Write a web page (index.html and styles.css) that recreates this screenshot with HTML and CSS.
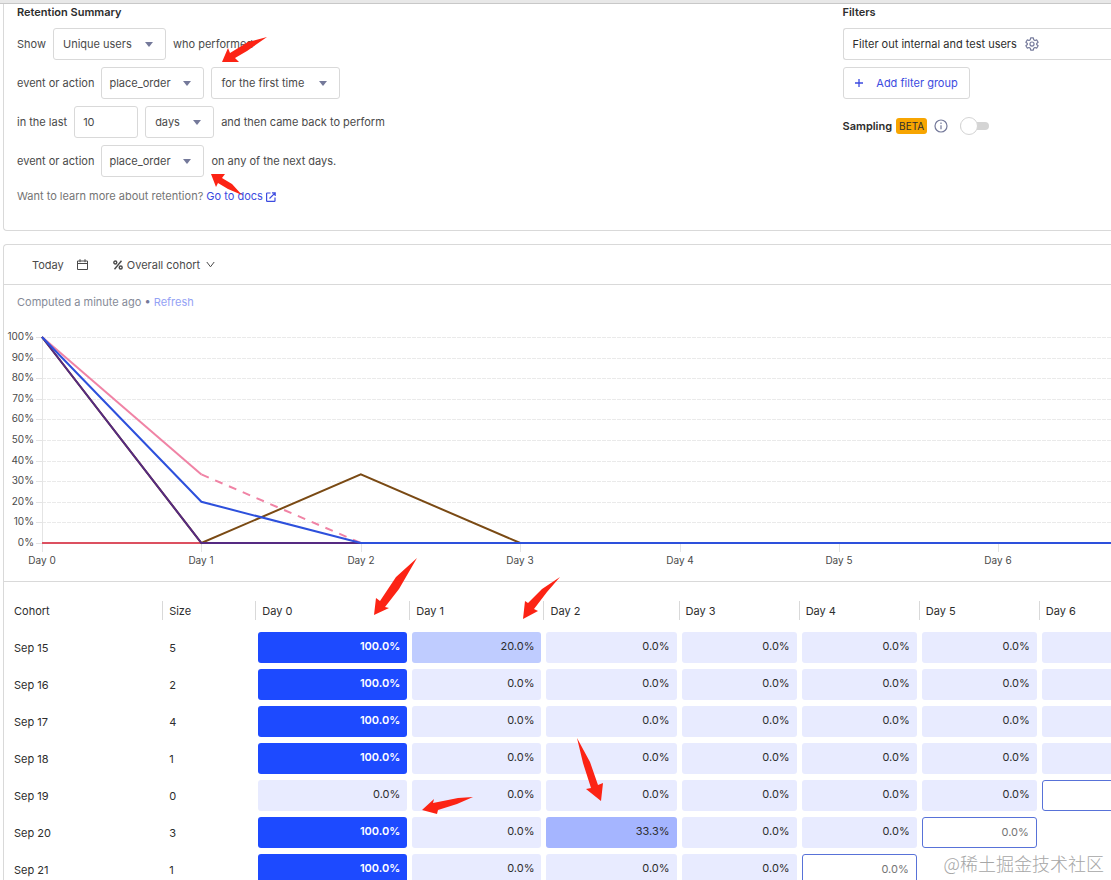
FILE: index.html
```html
<!DOCTYPE html>
<html lang="en">
<head>
    <meta charset="UTF-8">
    <meta name="viewport" content="width=device-width, initial-scale=1.0">
    <title>Retention</title>
    <link rel="stylesheet" href="styles.css">
</head>
<body>
    <div class="topbar"></div>

    <section class="card query">
        <div class="summary">
            <h2>Retention Summary</h2>
            <div class="row">
                <label for="users">Show</label>
                <span class="select w-users"><select id="users"><option>Unique users</option></select></span>
                <span>who performed</span>
            </div>
            <div class="row">
                <label for="target">event or action</label>
                <span class="select w-event"><select id="target"><option>place_order</option></select></span>
                <span class="select w-first"><select aria-label="Occurrence"><option>for the first time</option></select></span>
            </div>
            <div class="row">
                <label for="period">in the last</label>
                <input class="number" id="period" type="text" value="10">
                <span class="select w-days"><select aria-label="Unit"><option>days</option></select></span>
                <span>and then came back to perform</span>
            </div>
            <div class="row">
                <label for="returning">event or action</label>
                <span class="select w-event"><select id="returning"><option>place_order</option></select></span>
                <span>on any of the next days.</span>
            </div>
            <p class="docs">Want to learn more about retention?
                <a href="#docs">Go to docs<svg width="10" height="10" viewBox="0 0 10 10"><path d="M4.500 1H1.200Q.6 1 .6 1.600V8.800Q.6 9.400 1.200 9.400H8.400Q9 9.400 9 8.800V5.500M6 .8H9.200V4M9.200 .8L3.500 6.500" fill="none" stroke="currentColor" stroke-width="1.200"/></svg></a>
            </p>
        </div>

        <div class="filters">
            <h2>Filters</h2>
            <div class="filter-box">
                <span>Filter out internal and test users</span>
                <button class="icon-btn" aria-label="Settings">
                    <svg width="14" height="14" viewBox="0 0 24 24" fill="none" stroke="currentColor" stroke-width="2" stroke-linejoin="round"><path d="M9.700 1.500h4.600l.7 3.300 2 1.200 3.200-1 2.300 4-2.500 2.200v1.600l2.500 2.200-2.300 4-3.200-1-2 1.200-.7 3.300H9.700L9 19.200 7 18l-3.200 1-2.300-4L4 12.800v-1.600L1.500 9l2.300-4L7 6l2-1.200z"/><circle cx="12" cy="12" r="3.500"/></svg>
                </button>
            </div>
            <button class="add-filter"><svg width="10" height="10" viewBox="0 0 10 10"><path d="M5 1v8M1 5h8" stroke="currentColor" stroke-width="1.300"/></svg>Add filter group</button>
            <div class="sampling">
                <label for="sampling">Sampling</label>
                <span class="beta">BETA</span>
                <svg class="info" width="14" height="14" viewBox="0 0 14 14" fill="none" stroke="currentColor" stroke-width="1.200"><circle cx="7" cy="7" r="6"/><path d="M7 6.200v4M7 3.600v1.400"/></svg>
                <input class="toggle" id="sampling" type="checkbox">
            </div>
        </div>
    </section>

    <section class="card results">
        <div class="toolbar">
            <button class="date">Today
                <svg width="11" height="11" viewBox="0 0 11 11" fill="none" stroke="currentColor"><path d="M.5 2h10v8.500H.5zM.5 4.500h10M3 .2v3M8 .2v3"/></svg>
            </button>
            <button class="cohort-btn">
                <svg width="10" height="10" viewBox="0 0 10 10" fill="none" stroke="currentColor" stroke-width="1.400"><circle cx="2.300" cy="2.500" r="1.500"/><circle cx="7.700" cy="7.500" r="1.500"/><path d="M8.500 .8L1.500 9.200"/></svg>
                <span>Overall cohort</span>
                <svg class="chevron" width="9" height="7" viewBox="0 0 9 7"><path d="M.8 1l3.700 4.800L8.200 1" fill="none" stroke="currentColor"/></svg>
            </button>
        </div>
        <p class="computed">Computed a minute ago <b>•</b> <a href="#refresh">Refresh</a></p>
        <svg class="chart" id="chart" width="1320" height="250" role="img" aria-label="Retention by day"></svg>
        <div class="table-wrap">
            <table>
                <colgroup>
                    <col class="c-cohort"><col class="c-size"><col class="c-day0"><col class="c-day1"><col class="c-day2">
                    <col class="c-day"><col class="c-day"><col class="c-day"><col class="c-day">
                </colgroup>
                <thead>
                    <tr><th>Cohort</th><th>Size</th><th>Day 0</th><th>Day 1</th><th>Day 2</th><th>Day 3</th><th>Day 4</th><th>Day 5</th><th>Day 6</th></tr>
                </thead>
                <tbody id="cohorts"></tbody>
            </table>
        </div>
    </section>

    <svg class="arrows" width="1111" height="880" viewBox="0 0 1111 880" aria-hidden="true">
        <path d="M267 37L248 42L230 53L228 48L222 62L239 62L235 58L247 51Z"/>
        <path d="M211 174L225 174L222 178L232 184L242 195L228 189L218 183L216 187Z"/>
        <path d="M417 558L396 577L380 601L376 598L374 615L389 608L385 607L399 589Z"/>
        <path d="M560 577L542 589L528 603L525 601L523 619L538 611L534 609L547 592Z"/>
        <path d="M577 738L583 763L591 788L586 789L601 801L603 783L598 785L590 762Z"/>
        <path d="M473 797L458 798L433 803L434 799L422 810L437 814L438 810L457 804Z"/>
    </svg>
    <div class="watermark">@稀土掘金技术社区</div>

    <script>
        // null = bar without a value
        const cohorts = [
            ['Sep 15', 5, [100, 20, 0, 0, 0, 0, null]],
            ['Sep 16', 2, [100, 0, 0, 0, 0, 0, null]],
            ['Sep 17', 4, [100, 0, 0, 0, 0, 0, null]],
            ['Sep 18', 1, [100, 0, 0, 0, 0, 0, null]],
            ['Sep 19', 0, [0, 0, 0, 0, 0, 0, null]],
            ['Sep 20', 3, [100, 0, 33.3, 0, 0, 0]],
            ['Sep 21', 1, [100, 0, 0, 0, 0]]
        ];

        // the last day of these cohorts is still in progress
        const openCohorts = ['Sep 19', 'Sep 20', 'Sep 21'];

        function cellClass(value, open) {
            if (open) return 'cell open';
            if (value === 100) return 'cell full';
            if (value > 30) return 'cell mid';
            if (value > 0) return 'cell low';
            return 'cell';
        }

        document.getElementById('cohorts').innerHTML = cohorts.map(([name, size, days]) => {
            const cells = days.map((v, i) => {
                const open = openCohorts.includes(name) && i === days.length - 1;
                const text = v === null ? '' : v.toFixed(1) + '%';
                return `<td class="day"><div class="${cellClass(v, open)}">${text}</div></td>`;
            }).join('');
            return `<tr><td>${name}</td><td>${size}</td>${cells}</tr>`;
        }).join('');

        // chart
        const left = 38, top0 = 14, height = 206, step = 159.4;
        const px = day => left + day * step;
        const py = pct => top0 + height - pct / 100 * height;
        let out = '';
        for (let p = 0; p <= 100; p += 10) {
            const y = Math.round(py(p)) + 0.5;
            out += `<line class="grid" x1="${left}" x2="1320" y1="${y}" y2="${y}"/>`;
            out += `<line class="tick" x1="${left - 6}" x2="${left}" y1="${y}" y2="${y}"/>`;
            out += `<text class="axis-y" x="${left - 8}" y="${Math.round(py(p)) + 3}">${p}%</text>`;
        }
        out += `<line class="tick" x1="${left + 0.5}" x2="${left + 0.5}" y1="${top0}" y2="${py(0) + 9}"/>`;
        for (let d = 0; d <= 6; d++) {
            const x = Math.round(px(d)) + 0.5;
            out += `<line class="tick" x1="${x}" x2="${x}" y1="${py(0)}" y2="${py(0) + 9}"/>`;
            out += `<text class="axis-x" x="${Math.round(px(d))}" y="${py(0) + 21}">Day ${d}</text>`;
        }
        const line = (cls, pts) => `<polyline class="line ${cls}" points="${pts.map(([d, p]) => px(d) + ',' + py(p)).join(' ')}"/>`;
        out += line('red', [[0, 0], [1, 0]]);
        out += line('pink', [[0, 100], [1, 33.3]]);
        out += line('pink dashed', [[1, 33.3], [2, 0]]);
        out += line('brown', [[0, 100], [1, 0], [2, 33.3], [3, 0]]);
        out += line('purple', [[0, 100], [1, 0], [2, 0]]);
        out += line('blue', [[0, 100], [1, 20], [2, 0], [8, 0]]);
        document.getElementById('chart').innerHTML = out;
    </script>
</body>
</html>
```
FILE: styles.css
```css
* { box-sizing: border-box; }
body {
    margin: 0;
    height: 100vh;
    overflow: hidden;
    position: relative;
    background: #fff;
    color: #2d2d2d;
    font-family: Inter, "Liberation Sans", sans-serif;
    font-size: 11px;
    line-height: 16px;
}
h2, p { margin: 0; }
h2 {
    font-size: 11px;
    font-weight: 600;
    line-height: 16px;
    margin-bottom: 8px;
}
a { color: #3c4be0; text-decoration: none; }
button, input, select {
    font: inherit;
    color: inherit;
    margin: 0;
}
button {
    background: none;
    border: 0;
    padding: 0;
}
.topbar {
    height: 4px;
    background: #e8e8e8;
    border-bottom: 1px solid #c8c8c8;
}
.card {
    margin-left: 3px;
    border: 1px solid #d9d9d9;
    border-right: 0;
    border-radius: 4px 0 0 4px;
}

/* query */
.query {
    display: grid;
    grid-template-columns: 3fr 1fr;
    border-top: 0;
    border-top-left-radius: 0;
    padding: 0 0 26px 13px;
}
.summary { color: #4a4a4a; }
.summary h2, .filters h2 { color: #2d2d2d; }
.row {
    display: flex;
    align-items: center;
    gap: 7px;
    height: 32px;
    margin-bottom: 7px;
}
.select {
    display: grid;
    align-items: center;
    height: 32px;
}
.select select, .select::after { grid-area: 1 / 1; }
.select select {
    width: 100%;
    height: 32px;
    appearance: none;
    border: 1px solid #d9d9d9;
    border-radius: 3px;
    background: #fff;
    padding: 0 9px;
}
.select::after {
    content: "";
    justify-self: end;
    margin-right: 13px;
    border: 4px solid transparent;
    border-top: 5px solid #74799a;
    border-bottom: 0;
    pointer-events: none;
}
.w-users { width: 113px; }
.w-event { width: 103px; }
.w-event select { padding: 0 7px; }
.w-first { width: 129px; }
.w-days { width: 69px; }
.number {
    width: 64px;
    height: 32px;
    border: 1px solid #d9d9d9;
    border-radius: 3px;
    padding: 0 8px;
}
.docs { color: #747474; padding-top: 4px; }
.docs svg { margin-left: 3px; vertical-align: -2px; }

.filters { padding-left: 5px; }
.filter-box {
    display: flex;
    align-items: center;
    gap: 8px;
    height: 32px;
    border: 1px solid #d9d9d9;
    border-right: 0;
    border-radius: 3px 0 0 3px;
    padding-left: 9px;
}
.icon-btn { display: flex; color: #74799a; }
.add-filter {
    display: flex;
    align-items: center;
    justify-content: center;
    gap: 12px;
    width: 127px;
    height: 32px;
    margin-top: 7px;
    border: 1px solid #d9d9d9;
    border-radius: 3px;
    color: #3c4be0;
}
.sampling {
    display: flex;
    align-items: center;
    gap: 4px;
    margin-top: 19px;
}
.sampling label { font-weight: 600; }
.beta {
    background: #f7a501;
    border-radius: 3px;
    padding: 0 3px;
    font-size: 10px;
}
.info { color: #74799a; margin: 0 8px 0 3px; }
.toggle {
    appearance: none;
    display: flex;
    align-items: center;
    width: 29px;
    height: 8px;
    border-radius: 4px;
    background: #d4d4d4;
}
.toggle::before {
    content: "";
    width: 16px;
    height: 16px;
    flex: none;
    border: 1px solid #d4d4d4;
    border-radius: 50%;
    background: #fff;
}

/* results */
.results {
    margin-top: 13px;
    border-bottom: 0;
    overflow: hidden;
}
.toolbar {
    display: flex;
    align-items: center;
    gap: 25px;
    height: 40px;
    padding-left: 28px;
    border-bottom: 1px solid #d9d9d9;
    color: #4a4a4a;
}
.date { display: flex; align-items: center; gap: 13px; }
.cohort-btn { display: flex; align-items: center; gap: 4px; }
.chevron { margin-left: 2px; }
.computed { padding: 9px 0 0 13px; color: #868b98; }
.computed b { color: #74799a; font-weight: 400; }
.computed a { color: #94a2f5; }
.chart { display: block; margin-top: 13px; height: 258px; }
.grid { stroke: #eaeaea; stroke-dasharray: 4 1; }
.tick { stroke: #e4e4e4; }
.axis-x, .axis-y { fill: #4a4a4a; font-size: 10px; }
.axis-x { text-anchor: middle; }
.axis-y { text-anchor: end; }
.line { fill: none; stroke-width: 2; }
.red { stroke: #dc5060; }
.pink { stroke: #f083a5; }
.dashed { stroke-dasharray: 8 7; }
.brown { stroke: #7a4a14; }
.purple { stroke: #552a82; }
.blue { stroke: #2d50dc; }

.table-wrap { border-top: 1px solid #d9d9d9; }
table {
    width: 1155px;
    table-layout: fixed;
    border-collapse: collapse;
    margin-top: 19px;
}
.c-cohort { width: 158px; }
.c-size { width: 93px; }
.c-day0 { width: 154px; }
.c-day1 { width: 134px; }
.c-day2 { width: 135px; }
.c-day { width: 120px; }
th {
    height: 19px;
    padding: 0 0 0 7px;
    font-weight: 400;
    text-align: left;
    background: linear-gradient(#d9d9d9, #d9d9d9) left / 1px 100% no-repeat;
}
th:first-child { background: none; padding-left: 10px; }
tbody::before { content: ""; display: block; height: 9px; }
td { height: 37px; padding: 0 0 0 7px; }
td:first-child { padding-left: 10px; }
td.day { padding: 0 2px 0 3px; }
.cell {
    height: 31px;
    border-radius: 3px;
    padding: 0 7px;
    background: #e8ebff;
    line-height: 29px;
    text-align: right;
}
.full { background: #1d4aff; color: #fff; font-weight: 600; }
.mid { background: #a5b5ff; }
.low { background: #bfccff; }
.open {
    border: 1px solid #5872d8;
    background: #fff;
    color: #747474;
}

/* annotations */
.arrows {
    position: absolute;
    left: 0;
    top: 0;
    pointer-events: none;
    fill: #fc2314;
}
.watermark {
    position: absolute;
    right: 7px;
    bottom: 4px;
    color: #a6a6a6;
    font-family: "Noto Sans CJK SC", sans-serif;
    font-size: 18px;
    font-weight: 300;
    line-height: 26px;
    pointer-events: none;
}
```
